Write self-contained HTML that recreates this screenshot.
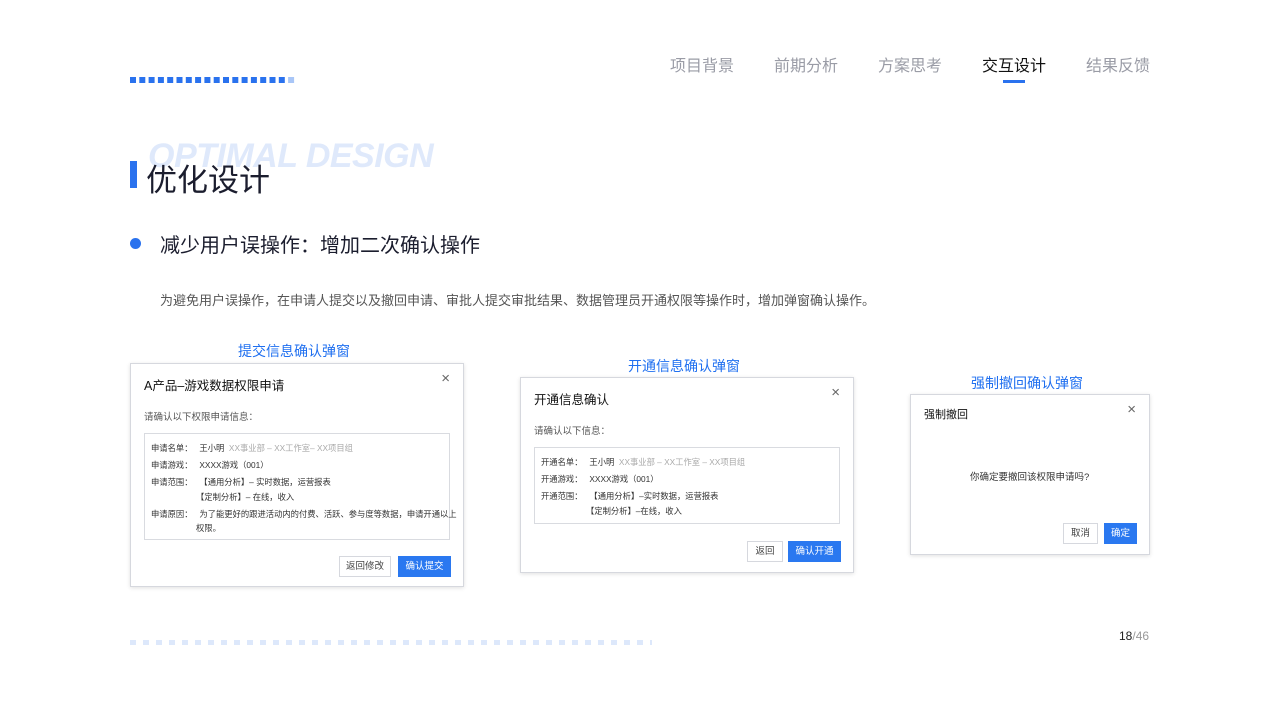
<!DOCTYPE html>
<html><head><meta charset="utf-8"><style>
*{margin:0;padding:0;box-sizing:border-box}
body{width:1280px;height:720px;background:#fff;position:relative;overflow:hidden;font-family:"Liberation Sans","Noto Sans CJK SC",sans-serif;color:#1f2233}
.a{position:absolute;white-space:nowrap}
.nav{top:52px;font-size:16px;color:#9a9ca6}
.dlg{position:absolute;background:#fff;border:1px solid #d6d8de;box-shadow:0 1px 4px rgba(0,0,0,.12)}
.dlg .t{position:absolute;left:13px;top:11px;font-size:12.5px;color:#111}
.dlg .x{position:absolute;right:13px;top:6px;font-size:15px;color:#666}
.dlg .s{position:absolute;left:13px;font-size:9.5px;color:#555}
.box{position:absolute;left:13px;right:13px;border:1px solid #d9dbe0;font-size:8.3px;color:#333}
.box div{position:absolute;left:6px;white-space:nowrap}
.g{color:#aaa}
.btn{position:absolute;height:21px;font-size:9.5px;line-height:19px;text-align:center;border:1px solid #d6d8de;color:#444;background:#fff}
.pb{background:#2a78f0;border-color:#2a78f0;color:#fff}
.cap{font-size:14px;color:#1f6ff0}
</style></head><body>
<svg class="a" style="left:130px;top:77px" width="170" height="7">
<g fill="#2a72ee">
<rect x="0" y="0" width="6" height="6"/><rect x="9.3" width="6" height="6"/><rect x="18.6" width="6" height="6"/><rect x="27.9" width="6" height="6"/><rect x="37.2" width="6" height="6"/><rect x="46.5" width="6" height="6"/><rect x="55.8" width="6" height="6"/><rect x="65.1" width="6" height="6"/><rect x="74.4" width="6" height="6"/><rect x="83.7" width="6" height="6"/><rect x="93" width="6" height="6"/><rect x="102.3" width="6" height="6"/><rect x="111.6" width="6" height="6"/><rect x="120.9" width="6" height="6"/><rect x="130.2" width="6" height="6"/><rect x="139.5" width="6" height="6"/><rect x="148.8" width="6" height="6"/></g>
<rect x="158.1" width="6" height="6" fill="#a9c6f7"/></svg>
<div class="a nav" style="left:670px">项目背景</div>
<div class="a nav" style="left:774px">前期分析</div>
<div class="a nav" style="left:878px">方案思考</div>
<div class="a nav" style="left:982px;color:#111">交互设计</div>
<div class="a" style="left:1003px;top:80px;width:22px;height:3px;background:#2a72ee"></div>
<div class="a nav" style="left:1086px">结果反馈</div>

<div class="a" style="left:148px;top:137px;font-size:34px;font-weight:bold;font-style:italic;color:#dfe9fb;letter-spacing:-0.5px">OPTIMAL DESIGN</div>
<div class="a" style="left:130px;top:161px;width:7px;height:27px;background:#2a72ee"></div>
<div class="a" style="left:146px;top:155px;font-size:31px;color:#1b1d2e">优化设计</div>
<div class="a" style="left:130px;top:238px;width:11px;height:11px;border-radius:50%;background:#2a72ee"></div>
<div class="a" style="left:160px;top:229px;font-size:20px;color:#1b1d2e">减少用户误操作：增加二次确认操作</div>
<div class="a" style="left:160px;top:290px;font-size:13px;color:#555">为避免用户误操作，在申请人提交以及撤回申请、审批人提交审批结果、数据管理员开通权限等操作时，增加弹窗确认操作。</div>

<div class="a cap" style="left:238px;top:341px">提交信息确认弹窗</div>
<div class="dlg" style="left:130px;top:363px;width:334px;height:224px">
<div class="t">A产品–游戏数据权限申请</div><div class="x">×</div>
<div class="s" style="top:45px">请确认以下权限申请信息：</div>
<div class="box" style="top:69px;height:107px">
<div style="top:8px">申请名单：&nbsp;&nbsp;&nbsp;王小明 &nbsp;<span class="g">XX事业部 – XX工作室– XX项目组</span></div>
<div style="top:25px">申请游戏：&nbsp;&nbsp;&nbsp;XXXX游戏（001）</div>
<div style="top:42px">申请范围：&nbsp;&nbsp;&nbsp;【通用分析】– 实时数据，运营报表</div>
<div style="top:57px;left:51px">【定制分析】– 在线，收入</div>
<div style="top:74px">申请原因：&nbsp;&nbsp;&nbsp;为了能更好的跟进活动内的付费、活跃、参与度等数据，申请开通以上</div>
<div style="top:88px;left:51px">权限。</div>
</div>
<div class="btn" style="left:208px;top:192px;width:52px">返回修改</div>
<div class="btn pb" style="left:267px;top:192px;width:53px">确认提交</div>
</div>

<div class="a cap" style="left:628px;top:356px">开通信息确认弹窗</div>
<div class="dlg" style="left:520px;top:377px;width:334px;height:196px">
<div class="t">开通信息确认</div><div class="x">×</div>
<div class="s" style="top:45px">请确认以下信息：</div>
<div class="box" style="top:69px;height:77px">
<div style="top:8px">开通名单：&nbsp;&nbsp;&nbsp;王小明 &nbsp;<span class="g">XX事业部 – XX工作室 – XX项目组</span></div>
<div style="top:25px">开通游戏：&nbsp;&nbsp;&nbsp;XXXX游戏（001）</div>
<div style="top:42px">开通范围：&nbsp;&nbsp;&nbsp;【通用分析】–实时数据，运营报表</div>
<div style="top:57px;left:51px">【定制分析】–在线，收入</div>
</div>
<div class="btn" style="left:226px;top:163px;width:36px">返回</div>
<div class="btn pb" style="left:267px;top:163px;width:53px">确认开通</div>
</div>

<div class="a cap" style="left:971px;top:373px">强制撤回确认弹窗</div>
<div class="dlg" style="left:910px;top:394px;width:240px;height:161px">
<div class="t" style="font-size:11px">强制撤回</div><div class="x">×</div>
<div class="s" style="top:74px;left:59px;color:#333">你确定要撤回该权限申请吗?</div>
<div class="btn" style="left:152px;top:128px;width:35px">取消</div>
<div class="btn pb" style="left:193px;top:128px;width:33px">确定</div>
</div>

<div class="a" style="left:130px;top:640px;width:522px;height:5px;background:repeating-linear-gradient(90deg,#dde8fb 0 6px,transparent 6px 13px)"></div>
<div class="a" style="left:1119px;top:629px;font-size:12px;color:#222">18<span style="color:#999">/46</span></div>
</body></html>
